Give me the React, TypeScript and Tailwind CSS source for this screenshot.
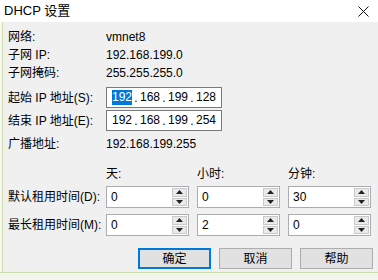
import React from "react"

const font = { fontFamily: '"Liberation Sans", "Noto Sans CJK SC", sans-serif' }

function IpBox({ parts, selectFirst }: { parts: string[]; selectFirst?: boolean }) {
  return (
    <div className="flex items-center w-[116px] h-[21px] bg-white border border-[#7a7a7a] pl-[5px] text-[12px] text-[#000]">
      {parts.map((p, i) => (
        <React.Fragment key={i}>
          {i > 0 && <span className="w-[8px] text-center">.</span>}
          <span
            className={`w-[20px] text-center leading-[15px] ${
              i === 0 && selectFirst ? "bg-[#0078d7] text-white" : ""
            }`}
          >
            {p}
          </span>
        </React.Fragment>
      ))}
    </div>
  )
}

function SpinBox({ value }: { value: string }) {
  return (
    <div className="flex items-stretch w-[83px] h-[22px] bg-white border border-[#abadb3]">
      <div className="flex-1 pl-[4px] text-[12px] leading-[20px]">{value}</div>
      <div className="flex flex-col w-[15px] my-[1px] mr-[1px] gap-[1px]">
        <div className="flex-1 flex items-center justify-center bg-[#eaeaea] border border-[#c9c9c9]">
          <svg width="7" height="4" viewBox="0 0 7 4">
            <path d="M0 4 L3.5 0 L7 4 Z" fill="#222" />
          </svg>
        </div>
        <div className="flex-1 flex items-center justify-center bg-[#eaeaea] border border-[#c9c9c9]">
          <svg width="7" height="4" viewBox="0 0 7 4">
            <path d="M0 0 L3.5 4 L7 0 Z" fill="#222" />
          </svg>
        </div>
      </div>
    </div>
  )
}

function Btn({ label, primary }: { label: string; primary?: boolean }) {
  return (
    <div
      className={`flex items-center justify-center w-[73px] h-[21px] bg-[#e1e1e1] text-[12px] ${
        primary ? "border-2 border-[#0078d7]" : "border border-[#adadad]"
      }`}
    >
      {label}
    </div>
  )
}

export default function App() {
  const info = [
    ["网络:", "vmnet8"],
    ["子网 IP:", "192.168.199.0"],
    ["子网掩码:", "255.255.255.0"],
  ]

  return (
    <div className="w-[378px] h-[280px] overflow-hidden bg-white text-[#000]" style={font}>
      {/* Title bar */}
      <div className="flex items-center justify-between h-[22px] pl-[4px] pr-[9px] bg-white">
        <span className="text-[13px] text-[#000]">DHCP 设置</span>
        <svg width="11" height="11" viewBox="0 0 11 11">
          <path d="M0.5 0.5 L10.5 10.5 M10.5 0.5 L0.5 10.5" stroke="#111" strokeWidth="1" />
        </svg>
      </div>

      {/* Body */}
      <div className="flex h-[250px]">
        <div className="w-[3px] bg-[#f6f8ee] border-r border-[#cddcae]" />
        <div className="flex-1 bg-[#f0f0f0] pl-[5px] pt-[6px] text-[12px]">
          <div className="flex flex-col">
            {info.map(([k, v]) => (
              <div key={k} className="flex items-center h-[18px]">
                <span className="w-[98px]">{k}</span>
                <span>{v}</span>
              </div>
            ))}
          </div>

          <div className="flex items-center h-[23px] mt-[4px]">
            <span className="w-[98px]">起始 IP 地址(S):</span>
            <IpBox parts={["192", "168", "199", "128"]} selectFirst />
          </div>
          <div className="flex items-center h-[23px]">
            <span className="w-[98px]">结束 IP 地址(E):</span>
            <IpBox parts={["192", "168", "199", "254"]} />
          </div>
          <div className="flex items-center h-[23px]">
            <span className="w-[98px]">广播地址:</span>
            <span>192.168.199.255</span>
          </div>

          <div className="flex items-center h-[18px] mt-[10px] pl-[98px]">
            <span className="w-[91px]">天:</span>
            <span className="w-[91px]">小时:</span>
            <span>分钟:</span>
          </div>
          <div className="flex items-center h-[28px]">
            <span className="w-[98px]">默认租用时间(D):</span>
            <div className="flex gap-[8px]">
              <SpinBox value="0" />
              <SpinBox value="0" />
              <SpinBox value="30" />
            </div>
          </div>
          <div className="flex items-center h-[28px]">
            <span className="w-[98px]">最长租用时间(M):</span>
            <div className="flex gap-[8px]">
              <SpinBox value="0" />
              <SpinBox value="2" />
              <SpinBox value="0" />
            </div>
          </div>

          <div className="flex justify-end gap-[8px] pr-[5px] mt-[9px]">
            <Btn label="确定" primary />
            <Btn label="取消" />
            <Btn label="帮助" />
          </div>
        </div>
      </div>

      {/* Window below, cut off */}
      <div className="h-[1px] bg-[#cddcae]" />
      <div className="h-[7px] bg-[#f4f6ee]" />
    </div>
  )
}
